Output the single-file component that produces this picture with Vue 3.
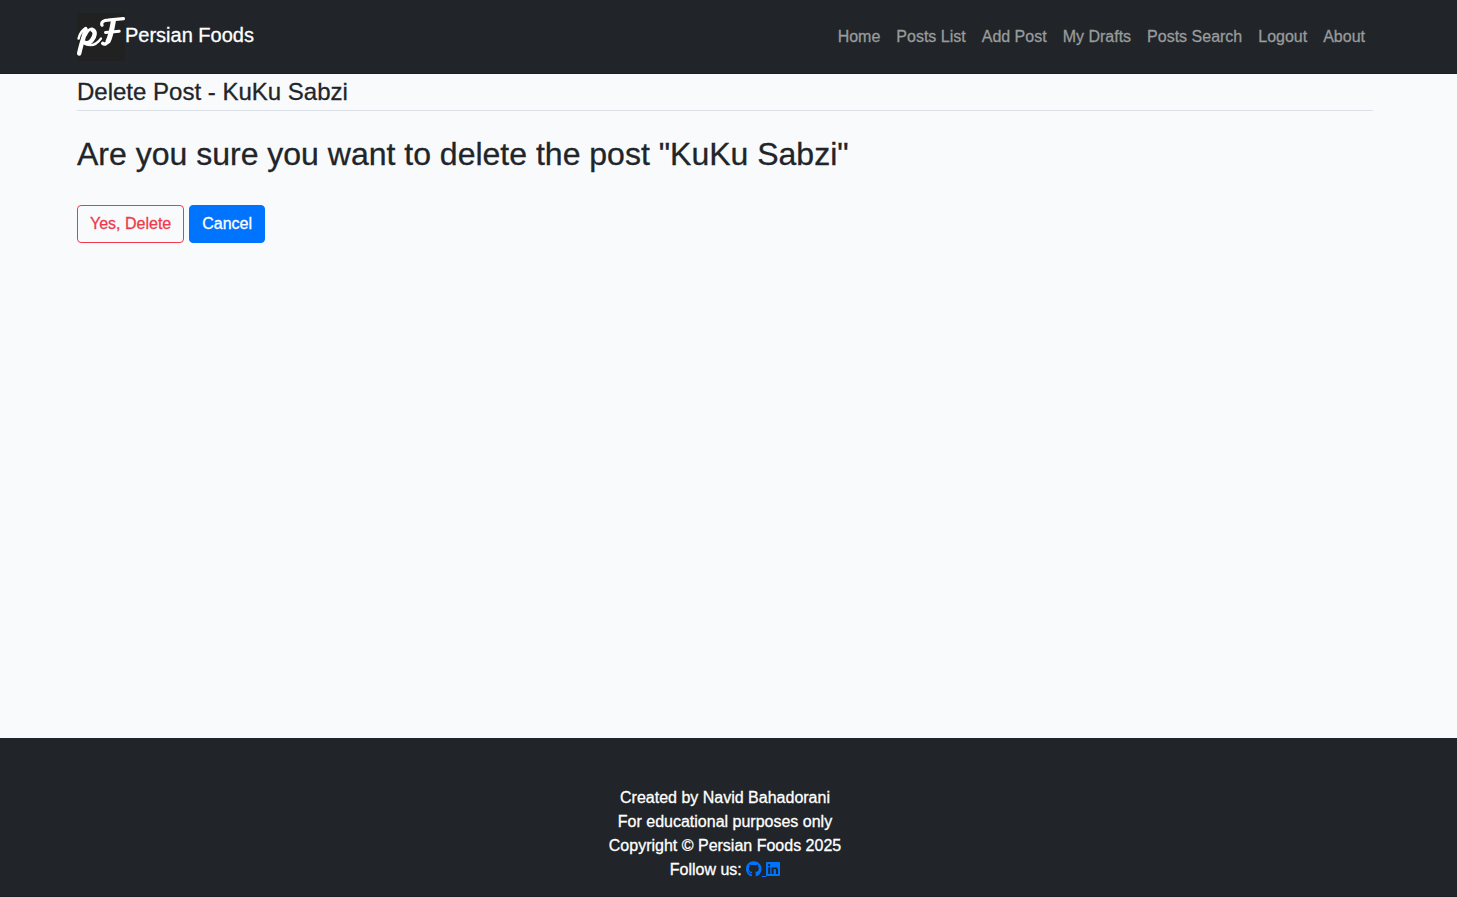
<script setup>
const links = ['Home', 'Posts List', 'Add Post', 'My Drafts', 'Posts Search', 'Logout', 'About']
const post = 'KuKu Sabzi'
const credits = ['Created by Navid Bahadorani', 'For educational purposes only', 'Copyright © Persian Foods 2025']
</script>

<template>
  <div class="page">
    <header class="navbar">
      <div class="container bar">
        <a class="brand">
          <svg class="logo" viewBox="0 0 48 48" fill="none" stroke="#fff" stroke-linecap="round" stroke-linejoin="round">
            <rect width="48" height="48" rx="2" fill="#212121" stroke="none" />
            <path stroke-width="4.4" d="M8.6 16.5C7 24 3.8 32 2.2 40.5" />
            <path stroke-width="2.6" d="M1.6 25.5C2.8 20.5 5.5 17 8.8 15.2" />
            <path stroke-width="2.8" d="M8.5 22C10.5 18 13 15.6 15 15.8" />
            <path stroke-width="4.4" d="M15.5 17C19 18.5 17.8 23.5 15 27C13 29.7 10.5 31 8 29.8" />
            <path stroke-width="2.2" d="M9 31.3C15 33.5 20.5 30.5 24 25.5" />
            <path stroke-width="3.2" d="M25 12.2C23.8 9 26.8 7.4 31 7.2L46.4 5.7" />
            <path stroke-width="5" d="M36.3 8.5C35 16 33.5 23.5 31.2 28" />
            <path stroke-width="3.6" d="M31 28.5C29.5 31.3 27.2 31.5 25.8 30.3" />
            <path stroke-width="3" d="M28.5 19.4L42.2 18.2" />
          </svg>
          <span>Persian Foods</span>
        </a>
        <nav class="links">
          <a v-for="link in links" :key="link">{{ link }}</a>
        </nav>
      </div>
    </header>
    <main class="container main">
      <h1 class="title">Delete Post - {{ post }}</h1>
      <h2 class="question">Are you sure you want to delete the post "{{ post }}"</h2>
      <div class="actions">
        <button class="btn danger">Yes, Delete</button>
        <button class="btn primary">Cancel</button>
      </div>
    </main>
    <footer class="footer">
      <div class="credits">
        <div v-for="line in credits" :key="line">{{ line }}</div>
        <div>Follow us: <a class="social"><svg class="github" viewBox="0 0 496 512"><path d="M244.8 8C106.1 8 0 113.3 0 252c0 110.9 69.8 205.8 169.5 239.2 12.8 2.3 17.3-5.6 17.3-12.1 0-6.2-.3-40.4-.3-61.4 0 0-70 15-84.7-29.8 0 0-11.4-29.1-27.8-36.6 0 0-22.9-15.7 1.6-15.4 0 0 24.9 2 38.6 25.8 21.9 38.6 58.6 27.5 72.9 20.9 2.3-16 8.8-27.1 16-33.7-55.9-6.2-112.3-14.3-112.3-110.5 0-27.5 7.6-41.3 23.6-58.9-2.6-6.5-11.1-33.3 2.6-67.9 20.9-6.5 69 27 69 27 20-5.6 41.5-8.5 62.8-8.5s42.8 2.9 62.8 8.5c0 0 48.1-33.6 69-27 13.7 34.7 5.2 61.4 2.6 67.9 16 17.7 25.8 31.5 25.8 58.9 0 96.5-58.9 104.2-114.8 110.5 9.2 7.9 17 22.9 17 46.4 0 33.7-.3 75.4-.3 83.6 0 6.5 4.6 14.4 17.3 12.1C428.2 457.8 496 362.9 496 252 496 113.3 383.5 8 244.8 8z" /></svg><span class="gap">&nbsp;</span><svg class="linkedin" viewBox="0 0 448 512"><path d="M416 32H31.9C14.3 32 0 46.5 0 64.3v383.4C0 465.5 14.3 480 31.9 480H416c17.6 0 32-14.5 32-32.3V64.3c0-17.8-14.4-32.3-32-32.3zM135.4 416H69V202.2h66.5V416zm-33.2-243c-21.3 0-38.5-17.3-38.5-38.5S80.9 96 102.2 96c21.2 0 38.5 17.3 38.5 38.5 0 21.3-17.2 38.5-38.5 38.5zm282.1 243h-66.4V312c0-24.8-.5-56.7-34.5-56.7-34.6 0-39.9 27-39.9 54.9V416h-66.4V202.2h63.7v29.2h.9c8.9-16.8 30.6-34.5 62.9-34.5 67.2 0 79.7 44.3 79.7 101.9V416z" /></svg></a></div>
      </div>
    </footer>
  </div>
</template>

<style>
body {
  margin: 0;
  background: #f8fafc;
}
</style>

<style scoped>
.page {
  display: flex;
  flex-direction: column;
  height: 897px;
  overflow: hidden;
  font: 16px/24px "Liberation Sans", Arial, sans-serif;
  color: #212529;
  -webkit-text-stroke: 0.3px currentColor;
}
.container {
  box-sizing: border-box;
  width: 1296px;
  margin-left: 77px;
}
.navbar {
  flex: none;
  height: 74px;
  box-sizing: border-box;
  background: #212529;
  border-bottom: 1px solid #1b1f22;
}
.bar {
  display: flex;
  justify-content: space-between;
  height: 73px;
  align-items: center;
}
.brand {
  display: flex;
  align-items: center;
  font-size: 20px;
  line-height: 30px;
  color: #fff;
}
.brand span {
  padding-bottom: 4px;
}
.logo {
  width: 48px;
  height: 48px;
}
.links {
  display: flex;
}
.links a {
  padding: 0 8px;
  color: #999b9c;
}
.main {
  flex: 1;
}
.title {
  margin: 0;
  padding: 3px 0 4px;
  font-size: 24px;
  line-height: 29px;
  font-weight: 400;
  border-bottom: 1px solid #dbe1e6;
}
.question {
  margin: 24px 0 32px;
  font-size: 32px;
  line-height: 38px;
  font-weight: 400;
}
.actions {
  display: flex;
  gap: 5px;
}
.btn {
  height: 38px;
  padding: 0 12px;
  border: 1px solid;
  border-radius: 4px;
  font: inherit;
}
.danger {
  color: #ee3a4c;
  border-color: #ee3a4c;
  background: transparent;
}
.primary {
  color: #fff;
  background: #0074ff;
  border-color: #0074ff;
}
.footer {
  flex: none;
  height: 159px;
  box-sizing: border-box;
  padding-top: 48px;
  background: #212529;
  border-bottom: 1px solid #1b1f22;
  color: #fff;
}
.credits {
  width: 1450px;
  text-align: center;
}
.social {
  color: #0074ff;
}
.social svg {
  height: 16px;
  fill: currentColor;
  vertical-align: -2px;
}
.github {
  width: 15.5px;
}
.linkedin {
  width: 14px;
}
.gap {
  text-decoration: underline;
}
</style>
